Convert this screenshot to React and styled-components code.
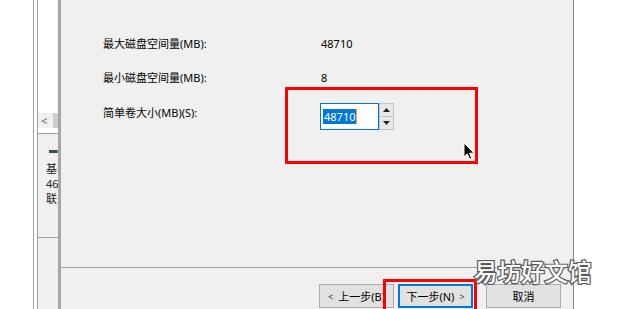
import React from "react"
import styled, { createGlobalStyle } from "styled-components"

const GlobalStyle = createGlobalStyle`
  html, body {
    margin: 0;
    padding: 0;
    background: #ffffff;
  }
  body {
    font-family: "Noto Sans", "Noto Sans CJK SC", sans-serif;
    font-size: 11px;
    color: #000;
  }
`

// whole screen area
const Screen = styled.div`
  position: relative;
  width: 620px;
  height: 309px;
  display: flex;
  overflow: hidden;
  background: #fff;
`

const Blank = styled.div`
  width: ${(p) => p.$w}px;
  flex: none;
  background: #fff;
  border-right: ${(p) => (p.$line ? "1px solid #a0a0a0" : "none")};
`

// the disk manager column peeking out behind the wizard
const Sidebar = styled.div`
  width: 20px;
  flex: none;
  display: flex;
  flex-direction: column;
  border-left: 1px solid #a0a0a0;
  border-right: 3px solid #a6a6a6;
  overflow: hidden;
`

const SideTop = styled.div`
  height: 113px;
  background: #fff;
`

const ScrollRow = styled.div`
  height: 15px;
  display: flex;
  align-items: center;
  justify-content: space-between;
  background: #f0f0f0;
  color: #606060;
  font-size: 11px;
  padding-left: 3px;
`

const Thumb = styled.div`
  width: 5px;
  height: 15px;
  background: #cdcdcd;
`

const SideGap = styled.div`
  height: 5px;
  background: #fff;
  border-bottom: 1px solid #a0a0a0;
`

const DiskPane = styled.div`
  height: 104px;
  background: #f0f0f0;
  border-bottom: 1px solid #a0a0a0;
  padding: 16px 0 0 8px;
  box-sizing: border-box;
  display: flex;
  flex-direction: column;
  gap: 1px;
`

const DiskIcon = styled.div`
  width: 12px;
  height: 3px;
  background: linear-gradient(90deg, #4a4a4a 0 70%, #2fb53a 70% 100%);
  margin: 0 0 8px 3px;
`

const DiskText = styled.div`
  font-size: 11px;
  line-height: 14px;
  height: 14px;
  color: #222;
  width: 12px;
  overflow: hidden;
`

const SideBottom = styled.div`
  flex: 1;
  background: #f0f0f0;
`

// wizard dialog
const Dialog = styled.div`
  width: 512px;
  flex: none;
  display: flex;
  flex-direction: column;
  background: #f0f0f0;
  border-right: 1px solid #8a8a8a;
`

const Body = styled.div`
  height: 268px;
  box-sizing: border-box;
  padding: 36px 0 0 42px;
  border-bottom: 1px solid #a0a0a0;
`

const Row = styled.div`
  display: grid;
  grid-template-columns: 217px auto;
  align-items: start;
  height: ${(p) => p.$h}px;
`

const Label = styled.div`
  line-height: 16px;
  white-space: nowrap;
`

const Value = styled.div`
  line-height: 16px;
  padding-left: 1px;
`

const Spin = styled.div`
  display: flex;
  margin-top: -2px;
`

const Field = styled.div`
  width: 55px;
  height: 25px;
  border: 1px solid #0078d7;
  background: #fff;
  display: flex;
  align-items: center;
  padding-left: 2px;
`

const Selected = styled.span`
  background: #0078d7;
  color: #fff;
  line-height: 15px;
  height: 15px;
  padding: 0 1px;
  border-right: 1px solid #f7a340;
`

const Arrows = styled.div`
  width: 15px;
  display: flex;
  flex-direction: column;
`

const ArrowBtn = styled.div`
  height: 12px;
  border: 1px solid #c4c4c4;
  border-top-width: ${(p) => (p.$down ? 0 : 1)}px;
  background: #e8e8e8;
  display: flex;
  align-items: center;
  justify-content: center;
  box-sizing: content-box;
  width: 13px;
`

const Footer = styled.div`
  flex: 1;
  display: flex;
  justify-content: flex-end;
  align-items: flex-start;
  padding: 16px 12px 0 0;
`

const Button = styled.div`
  width: 75px;
  height: 24px;
  box-sizing: border-box;
  border: ${(p) => (p.$primary ? "2px solid #0078d7" : "1px solid #adadad")};
  background: #e1e1e1;
  display: flex;
  align-items: center;
  justify-content: center;
  gap: 5px;
  margin-left: ${(p) => p.$gap || 0}px;
  white-space: nowrap;
`

const Chevron = styled.span`
  font-size: 9px;
  color: #333;
`

// overlays
const Highlight = styled.div`
  position: absolute;
  border: 3px solid #ff0000;
  box-sizing: border-box;
  pointer-events: none;
`

const Watermark = styled.div`
  position: absolute;
  left: 474px;
  top: 255px;
  font-family: "Noto Sans CJK SC", sans-serif;
  font-weight: 500;
  font-size: 23.5px;
  line-height: 32px;
  color: #fdfdfd;
  -webkit-text-stroke: 2.4px #585858;
  paint-order: stroke fill;
`

const Cursor = styled.svg`
  position: absolute;
  left: 463px;
  top: 142px;
`

const Tri = ({ down }) => (
  <svg width="7" height="4" viewBox="0 0 7 4">
    <path d={down ? "M0 0 L7 0 L3.5 4 Z" : "M0 4 L7 4 L3.5 0 Z"} fill="#222" />
  </svg>
)

export default function App() {
  return (
    <>
      <GlobalStyle />
      <Screen>
        <Blank $w={33} $line />
        <Blank $w={3} />
        <Sidebar>
          <SideTop />
          <ScrollRow>
            <span>&lt;</span>
            <Thumb />
          </ScrollRow>
          <SideGap />
          <DiskPane>
            <DiskIcon />
            <DiskText>基</DiskText>
            <DiskText>46</DiskText>
            <DiskText>联</DiskText>
          </DiskPane>
          <SideBottom />
        </Sidebar>

        <Dialog>
          <Body>
            <Row $h={34}>
              <Label>最大磁盘空间量(MB):</Label>
              <Value>48710</Value>
            </Row>
            <Row $h={35}>
              <Label>最小磁盘空间量(MB):</Label>
              <Value>8</Value>
            </Row>
            <Row $h={30}>
              <Label>简单卷大小(MB)(S):</Label>
              <Spin>
                <Field>
                  <Selected>48710</Selected>
                </Field>
                <Arrows>
                  <ArrowBtn>
                    <Tri />
                  </ArrowBtn>
                  <ArrowBtn $down>
                    <Tri down />
                  </ArrowBtn>
                </Arrows>
              </Spin>
            </Row>
          </Body>
          <Footer>
            <Button>
              <Chevron>&lt;</Chevron>上一步(B)
            </Button>
            <Button $primary $gap={4}>
              下一步(N)<Chevron>&gt;</Chevron>
            </Button>
            <Button $gap={13}>取消</Button>
          </Footer>
        </Dialog>

        <Blank $w={47} />

        <Highlight style={{ left: 285, top: 87, width: 193, height: 77 }} />
        <Highlight style={{ left: 383, top: 279, width: 94, height: 40 }} />

        <Cursor width="12" height="19" viewBox="0 0 12 19">
          <path
            d="M1 1 L1 15 L4.3 12 L6.6 17.2 L8.7 16.3 L6.5 11.2 L11 11.2 Z"
            fill="#000"
            stroke="#fff"
            strokeWidth="1"
            strokeLinejoin="round"
          />
        </Cursor>

        <Watermark>易坊好文馆</Watermark>
      </Screen>
    </>
  )
}
